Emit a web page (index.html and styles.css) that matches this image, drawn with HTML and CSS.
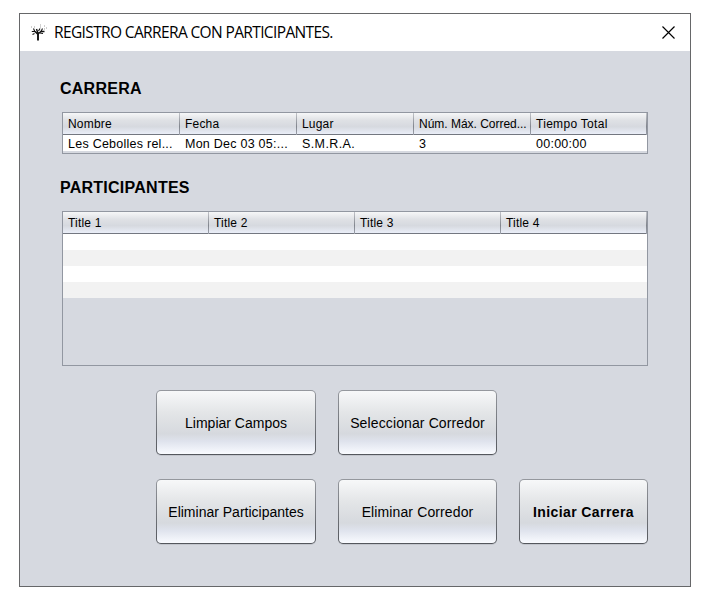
FILE: index.html
```html
<!DOCTYPE html>
<html lang="es">
<head>
<meta charset="utf-8">
<title>Registro carrera</title>
<link rel="stylesheet" href="styles.css">
</head>
<body>
<main class="window">
  <header class="titlebar">
    <svg class="logo" width="16" height="17" viewBox="0 0 16 17" fill="none" stroke="#111">
      <path d="M7 16.5V8.5" stroke-width="1.9"/>
      <path d="M7 10.5L4 7.5M7 9.5L5.5 5M7 10L10 7.5L13.5 7.5" stroke-width="1.4"/>
      <path d="M4.5 7.5H.8M4 8L2.5 4.5M3.5 9.5L1.5 10.5M10 7.5L11.5 4.5M7.5 7L9 4.5M9 9L12 9.5" stroke-width="1.1"/>
      <path d="M0 3h1M9 1h1M9 3h1M13 2h1M15 4h1M13 5h1M3 3h1" stroke-width="1" opacity=".4"/>
    </svg>
    <h1 class="title">REGISTRO CARRERA CON PARTICIPANTES.</h1>
    <svg class="close" width="13" height="13" viewBox="0 0 13 13" stroke="#000" stroke-width="1.15"><path d="M.5.5l12 12M12.5.5l-12 12"/></svg>
  </header>
  <section class="content">
    <h2 class="heading">CARRERA</h2>
    <div class="table race">
      <div class="row head"><span>Nombre</span><span>Fecha</span><span>Lugar</span><span class="tight">Núm. Máx. Corred...</span><span>Tiempo Total</span></div>
      <div class="row data"><span>Les Cebolles rel...</span><span>Mon Dec 03 05:...</span><span class="wide">S.M.R.A.</span><span>3</span><span>00:00:00</span></div>
    </div>
    <h2 class="heading second">PARTICIPANTES</h2>
    <div class="table people">
      <div class="row head"><span>Title 1</span><span>Title 2</span><span>Title 3</span><span>Title 4</span></div>
      <div class="row"></div>
      <div class="row alt"></div>
      <div class="row"></div>
      <div class="row alt"></div>
    </div>
    <div class="actions">
      <button>Limpiar Campos</button>
      <button class="runner">Seleccionar Corredor</button>
      <span></span>
      <button>Eliminar Participantes</button>
      <button class="runner">Eliminar Corredor</button>
      <button class="start">Iniciar Carrera</button>
    </div>
  </section>
</main>
</body>
</html>
```
FILE: styles.css
```css
* { box-sizing: border-box; }
body { margin: 0; padding: 13px 0 0 19px; background: #fff; color: #000; font-family: "Liberation Sans", Arial, sans-serif; }
.window { width: 672px; height: 574px; border: 1px solid #666769; background: #d6d9e0; }
.titlebar { display: flex; align-items: center; height: 37px; padding: 0 15px 0 11px; background: #fff; }
.logo { margin-right: 7px; }
.title { margin: 0; padding-bottom: 2px; font: 400 15.5px/20px "Open Sans", "Noto Sans", sans-serif; letter-spacing: -0.63px; white-space: nowrap; }
.close { margin-left: auto; }
.content { padding: 28px 0 0 40px; }
.heading { margin: 0; font-size: 16px; line-height: 20px; letter-spacing: 0.25px; }
.heading.second { margin-top: 24px; }
.table { width: 586px; margin-left: 2px; border: 1px solid #9297a1; overflow: hidden; }
.race { height: 42px; margin-top: 13px; }
.people { height: 155px; margin-top: 13px; }
.row { display: grid; height: 16px; background: #fff; font-size: 12px; line-height: 17px; letter-spacing: 0.2px; white-space: nowrap; }
.race .row { grid-template-columns: repeat(5, 117px); }
.people .row { grid-template-columns: repeat(4, 146px); }
.row span { padding-left: 5px; }
.row.data { font-size: 12.5px; line-height: 19px; letter-spacing: 0.25px; }
.row .wide { letter-spacing: 0.4px; }
.row .tight { letter-spacing: -0.02px; }
.row.alt { background: #f2f2f2; }
.row.head { height: 22px; line-height: 22px; border-bottom: 1px solid #737780; background: linear-gradient(#f6f7f8, #dfe1e5 35%, #d6d9df 65%, #eaeef8); }
.head span { border-right: 1px solid; border-image: linear-gradient(#c6c8cd, #82868e 60%, #a0a4ae) 1; }
.race .head span:last-child { width: 116px; padding-right: 1px; letter-spacing: 0.3px; }
.actions { display: grid; grid-template-columns: 160px 159px 129px; grid-auto-rows: 65px; gap: 24px 22px; margin: 24px 0 0 96px; }
button { margin: 0; padding: 0; border: 1px solid transparent; border-radius: 5px; color: #000; font: 14px/16px "Liberation Sans", Arial, sans-serif; white-space: nowrap; background: linear-gradient(#f7f8f9, #e3e5e7 35%, #d6d9de 68%, #dfe3ed 80%, #f9fbff) padding-box, linear-gradient(#95989e, #54575d) border-box; box-shadow: 0 1px 0 #c3c6cd; }
.runner { letter-spacing: 0.12px; }
.start { font-weight: 700; letter-spacing: 0.4px; }
```
